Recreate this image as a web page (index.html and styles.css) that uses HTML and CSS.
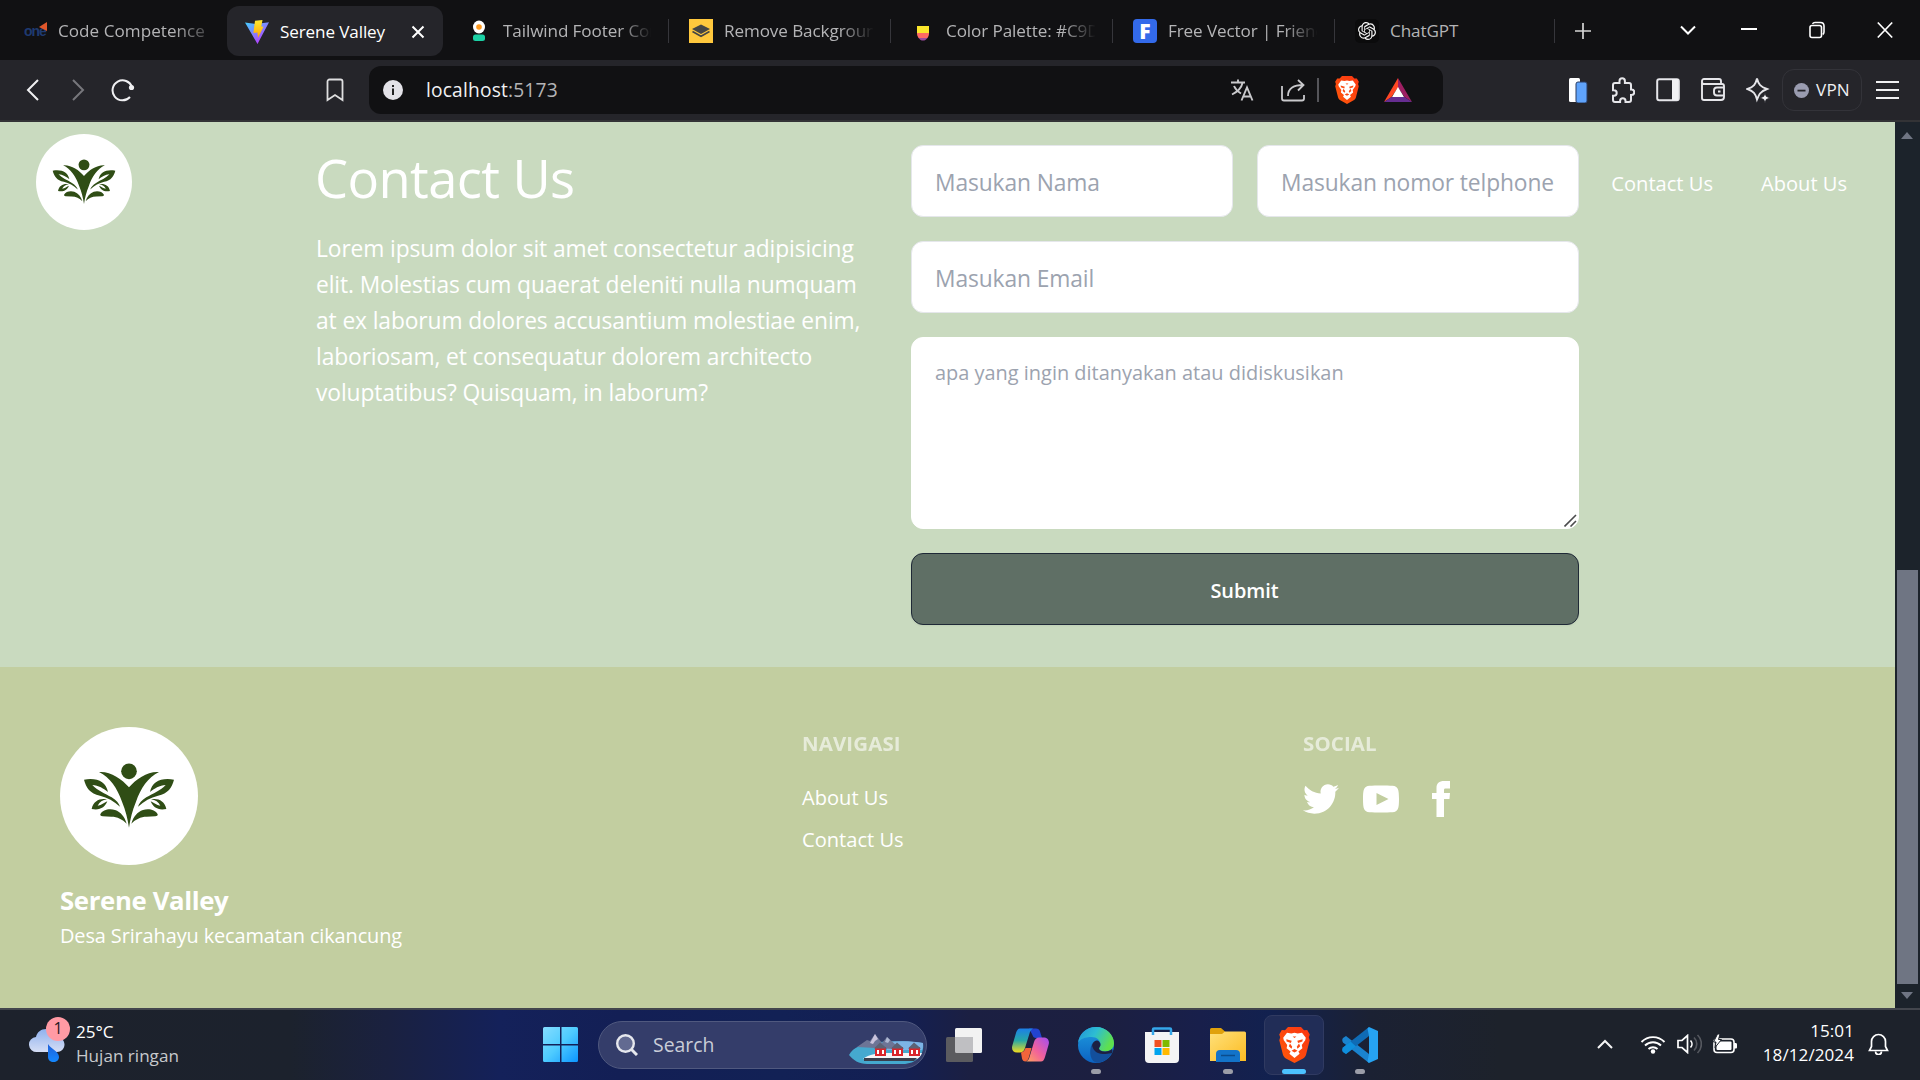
FILE: index.html
```html
<!DOCTYPE html>
<html lang="id">
<head>
<meta charset="utf-8">
<title>Serene Valley</title>
<link rel="stylesheet" href="styles.css">
</head>
<body>
<svg class="defs" width="0" height="0" aria-hidden="true">
  <defs>
    <g id="logo-half">
      <path d="M387 262C365 236 330 213 297 216C330 232 352 265 366 305C377 332 383 356 387 383Z"/>
      <path d="M252 239C290 232 318 245 324 276C312 266 295 256 277 255C292 272 315 280 335 292C349 301 357 310 360 320C342 303 322 292 300 287C270 281 258 262 252 239Z"/>
      <path d="M275 327C280 302 300 294 321 298C308 300 298 306 293 317C305 316 312 308 322 304C315 322 300 332 275 327Z"/>
      <path d="M301 343C308 328 330 325 345 330C362 336 374 350 380 371C368 358 352 350 334 350L308 349C302 348 300 346 301 343Z"/>
    </g>
    <symbol id="logo" viewBox="180 81 414 414">
      <g fill="#2f4d15">
        <circle cx="387" cy="214" r="23.5"/>
        <use href="#logo-half"/>
        <use href="#logo-half" transform="matrix(-1 0 0 1 774 0)"/>
      </g>
    </symbol>
    <symbol id="lion" viewBox="0 0 31 36">
      <path fill="url(#lion-g)" d="M9 0h13l3 3.2 3.200-.2 2.600 4.500-1 2.700.9 3-3.600 14.200c-.5 1.800-1.500 3-3 4L15.500 36l-8.600-4.600c-1.500-1-2.500-2.200-3-4L.3 13.200l.9-3-1-2.700L2.800 3 6 3.200z"/>
      <path fill="#fff" d="M8 5.800l4.300.7 3.200-.8 3.200.8 4.300-.7 3.800 5-.6 2.400-3.400 4.800.6 3.200-4 3.300 1.200 2.300-5.100 4.200-5.100-4.200 1.200-2.300-4-3.300.6-3.200-3.400-4.800-.6-2.400z"/>
      <path fill="#fb4a12" d="M7.300 12.200l5.400 1.600-.8 2.300-4.300-1.700zM23.700 12.200l-5.400 1.600.8 2.300 4.300-1.700zM13.600 9.500h3.800l-1.900 1.600zM11 16.500l2.200 3.200-.7 2-2.700-2.400zM20 16.500l-2.200 3.200.7 2 2.700-2.400zM12.500 23.700l3-1.600 3 1.600-3 1.800z"/>
    </symbol>
    <linearGradient id="lion-g" x1="0" y1="1" x2="1" y2="0"><stop offset="0" stop-color="#ff5a0a"/><stop offset="1" stop-color="#fa3512"/></linearGradient>
    <linearGradient id="vite-a" x1="0" y1="0" x2=".7" y2="1"><stop offset="0" stop-color="#41d1ff"/><stop offset="1" stop-color="#bd34fe"/></linearGradient>
    <linearGradient id="vite-b" x1="0" y1="0" x2="0" y2="1"><stop offset="0" stop-color="#ffea30"/><stop offset="1" stop-color="#ffa200"/></linearGradient>
    <linearGradient id="win-g" x1="0" y1="0" x2="1" y2="1"><stop offset="0" stop-color="#85ddff"/><stop offset=".5" stop-color="#4ecbff"/><stop offset="1" stop-color="#0c95ff"/></linearGradient>
    <linearGradient id="cloud-g" x1="0" y1="0" x2="0" y2="1"><stop offset="0" stop-color="#8fb1ee"/><stop offset="1" stop-color="#d5def5"/></linearGradient>
    <linearGradient id="drop-g" x1="0" y1="0" x2="0" y2="1"><stop offset="0" stop-color="#1f5fd8"/><stop offset="1" stop-color="#1488ff"/></linearGradient>
    <linearGradient id="cop-a" x1="0" y1="0" x2="0" y2="1"><stop offset="0" stop-color="#1c7fe8"/><stop offset=".5" stop-color="#27a8a6"/><stop offset="1" stop-color="#f2dc1e"/></linearGradient>
    <linearGradient id="cop-b" x1="1" y1="0" x2="0" y2="1"><stop offset="0" stop-color="#a44df0"/><stop offset=".55" stop-color="#f2629a"/><stop offset="1" stop-color="#ffa45c"/></linearGradient>
    <linearGradient id="edge-a" x1="0" y1="0" x2="1" y2=".4"><stop offset="0" stop-color="#2290d8"/><stop offset=".5" stop-color="#2dbdd3"/><stop offset="1" stop-color="#5fe04e"/></linearGradient>
    <linearGradient id="edge-b" x1="0" y1="0" x2="0" y2="1"><stop offset="0" stop-color="#1e9ddf"/><stop offset="1" stop-color="#0c62c2"/></linearGradient>
    <linearGradient id="folder-g" x1="0" y1="0" x2="1" y2="1"><stop offset="0" stop-color="#ffe07a"/><stop offset="1" stop-color="#fcbc22"/></linearGradient>
  </defs>
</svg>

<div class="tabstrip">
  <div class="tab tab-first">
    <span class="favicon one">one<svg width="8" height="9" viewBox="0 0 8 9"><path d="M8 0v9L0 5z" fill="#e0572b"/></svg></span>
    <span class="tab-title">Code Competence</span>
  </div>
  <div class="tab tab-active">
    <svg class="favicon" viewBox="0 0 24 24"><path fill="url(#vite-a)" d="M0 2.500l11 1.500 13-1.700L12.500 24z"/><path fill="url(#vite-b)" d="M10 .8L17.500 0l-1.200 6.500 2.200.2L13 18l-.6-5.500-4 .5z"/></svg>
    <span class="tab-title">Serene Valley</span>
    <svg class="tab-close" width="14" height="14" viewBox="0 0 14 14" stroke="#fff" stroke-width="2"><path d="M1.500 1.500l11 11M12.500 1.500l-11 11"/></svg>
  </div>
  <div class="tab tab-third">
    <svg class="favicon" viewBox="0 0 24 24"><ellipse cx="12" cy="8" rx="6" ry="6.500" fill="#fff"/><circle cx="12" cy="8" r="2.800" fill="#ff9a1f"/><rect x="6" y="15.500" width="12" height="6.500" rx="2.500" fill="#1bd1a5"/></svg>
    <span class="tab-title">Tailwind Footer Component</span>
  </div>
  <div class="tab">
    <svg class="favicon" viewBox="0 0 24 24"><path fill="#ffc83d" d="M0 0h24v24H0z"/><path fill="#454545" d="M12 5.500l9 4.500-9 5-9-5z"/><path fill="none" stroke="#454545" stroke-width="1.600" d="M3.500 12.500l8.500 4.800 8.500-4.800"/></svg>
    <span class="tab-title">Remove Background</span>
  </div>
  <div class="tab">
    <svg class="favicon" viewBox="0 0 24 24"><path fill="#fbe72b" d="M6 7h12v8H6z"/><path fill="#ff6a63" d="M6 14h12c0 2-.5 3.500-1.500 5h-9C6.500 17.500 6 16 6 14z"/><path fill="#9a4a9e" d="M7.500 19h9c-1.300 1.700-2.800 2.600-4.500 2.600S8.800 20.700 7.500 19z"/></svg>
    <span class="tab-title">Color Palette: #C9DABF</span>
  </div>
  <div class="tab">
    <span class="favicon freepik">F</span>
    <span class="tab-title">Free Vector | Friendly</span>
  </div>
  <div class="tab tab-last">
    <svg class="favicon gpt" viewBox="-4 -4 32 32"><path fill="#f4f4f4" d="M22.2819 9.8211a5.9847 5.9847 0 0 0-.5157-4.9108 6.0462 6.0462 0 0 0-6.5098-2.9A6.0651 6.0651 0 0 0 4.9807 4.1818a5.9847 5.9847 0 0 0-3.9977 2.9 6.0462 6.0462 0 0 0 .7427 7.0966 5.98 5.98 0 0 0 .511 4.9107 6.051 6.051 0 0 0 6.5146 2.9001A5.9847 5.9847 0 0 0 13.2599 24a6.0557 6.0557 0 0 0 5.7718-4.2058 5.9894 5.9894 0 0 0 3.9977-2.9001 6.0557 6.0557 0 0 0-.7475-7.0729zm-9.022 12.6081a4.4755 4.4755 0 0 1-2.8764-1.0408l.1419-.0804 4.7783-2.7582a.7948.7948 0 0 0 .3927-.6813v-6.7369l2.02 1.1686a.071.071 0 0 1 .038.052v5.5826a4.504 4.504 0 0 1-4.4945 4.4944zm-9.6607-4.1254a4.4708 4.4708 0 0 1-.5346-3.0137l.142.0852 4.783 2.7582a.7712.7712 0 0 0 .7806 0l5.8428-3.3685v2.3324a.0804.0804 0 0 1-.0332.0615L9.74 19.9502a4.4992 4.4992 0 0 1-6.1408-1.6464zM2.3408 7.8956a4.485 4.485 0 0 1 2.3655-1.9728V11.6a.7664.7664 0 0 0 .3879.6765l5.8144 3.3543-2.0201 1.1685a.0757.0757 0 0 1-.071 0l-4.8303-2.7865A4.504 4.504 0 0 1 2.3408 7.872zm16.5963 3.8558L13.1038 8.364 15.1192 7.2a.0757.0757 0 0 1 .071 0l4.8303 2.7913a4.4944 4.4944 0 0 1-.6765 8.1042v-5.6772a.79.79 0 0 0-.407-.667zm2.0107-3.0231l-.142-.0852-4.7735-2.7818a.7759.7759 0 0 0-.7854 0L9.409 9.2297V6.8974a.0662.0662 0 0 1 .0284-.0615l4.8303-2.7866a4.4992 4.4992 0 0 1 6.6802 4.66zM8.3065 12.863l-2.02-1.1638a.0804.0804 0 0 1-.038-.0567V6.0742a4.4992 4.4992 0 0 1 7.3757-3.4537l-.142.0805L8.704 5.459a.7948.7948 0 0 0-.3927.6813zm1.0976-2.3654l2.602-1.4998 2.6069 1.4998v2.9994l-2.5974 1.4997-2.6067-1.4997Z"/></svg>
    <span class="tab-title">ChatGPT</span>
  </div>
  <svg class="new-tab" width="16" height="16" viewBox="0 0 16 16" stroke="#d6d6d6" stroke-width="1.700"><path d="M8 0v16M0 8h16"/></svg>
  <div class="window-controls">
    <svg width="16" height="18" viewBox="0 0 16 18" fill="none" stroke="#fff" stroke-width="2"><path d="M1 5.500l7 7 7-7"/></svg>
    <svg width="16" height="18" viewBox="0 0 16 18" stroke="#fff" stroke-width="2"><path d="M0 8h16"/></svg>
    <svg width="16" height="18" viewBox="0 0 16 18" fill="none" stroke="#fff" stroke-width="1.600"><rect x="1" y="4.500" width="11.500" height="12" rx="2"/><path d="M3.500 2.800C4 2 5 1.500 6 1.500h5.500c2 0 3.500 1.500 3.500 3.500v6c0 1-.5 2-1.300 2.500"/></svg>
    <svg width="16" height="18" viewBox="0 0 16 18" stroke="#fff" stroke-width="1.700"><path d="M.8 1.500l14.400 15M15.200 1.500l-14.400 15"/></svg>
  </div>
</div>

<div class="toolbar">
  <svg class="nav-btn" viewBox="0 0 24 24" fill="none" stroke="#f0f0f2" stroke-width="2"><path d="M17 2L7 12l10 10"/></svg>
  <svg class="nav-btn" viewBox="0 0 24 24" fill="none" stroke="#77777c" stroke-width="2"><path d="M7 2l10 10L7 22"/></svg>
  <svg class="nav-btn" viewBox="0 0 24 24" fill="none" stroke="#f0f0f2" stroke-width="2"><path d="M19 19A10 10 0 1 1 21 9"/><circle cx="20.500" cy="9.500" r="2.600" fill="#f0f0f2" stroke="none"/></svg>
  <svg class="bookmark" viewBox="0 0 18 24" fill="none" stroke="#dededf" stroke-width="1.800"><path d="M1.500 3.500a2 2 0 0 1 2-2h11a2 2 0 0 1 2 2V22L9 17l-7.500 5z"/></svg>
  <div class="urlbar">
    <svg width="20" height="20" viewBox="0 0 20 20"><circle cx="10" cy="10" r="10" fill="#e3e2e8"/><path d="M9 8.500h2V15H9zM9 5h2v2H9z" fill="#222"/></svg>
    <span class="url">localhost<span class="port">:5173</span></span>
    <div class="url-icons">
      <svg width="24" height="24" viewBox="0 0 24 24" fill="none" stroke="#c9c9cc" stroke-width="1.900"><path d="M1 4.500h14M8 1.500v3M12.500 5C11.500 9.500 7 14 2 16.500M4 8c1.500 3.500 4.500 6 7 7.500M11.500 22.500L17 9.500l5.500 13M13.500 18.500h7"/></svg>
      <svg width="24" height="24" viewBox="0 0 24 24" fill="none" stroke="#c9c9cc" stroke-width="1.800"><path d="M1 8v12.500a2 2 0 0 0 2 2h18a2 2 0 0 0 2-2V17M17 2l5.500 5L17 12.500M22 7C13 7 7 10 7 18"/></svg>
      <i class="url-sep"></i>
      <svg class="brave" width="24" height="28"><use href="#lion"/></svg>
      <svg width="28" height="24" viewBox="0 0 28 24"><path fill="#ff4724" d="M14 0v9.500L7.500 19 0 24z"/><path fill="#9e1f63" d="M14 0l14 24-7.500-5L14 9.500z"/><path fill="#662d91" d="M0 24l7.500-5h13l7.500 5z"/><path fill="#fff" d="M14 9l6 10H8z"/></svg>
    </div>
  </div>
  <div class="extensions">
    <svg width="24" height="26" viewBox="0 0 24 26"><rect x="3" y="1" width="11" height="24" rx="1.500" fill="#fff"/><rect x="10" y="5" width="11" height="21" rx="2" fill="#5fa3fb" stroke="#2b3d63" stroke-width="1"/></svg>
    <svg width="24" height="26" viewBox="0 0 24 26" fill="none" stroke="#e6e6ea" stroke-width="2"><path d="M2 8a2 2 0 0 1 2-2h4.500V4a2.700 2.700 0 0 1 5.400 0v2H18a2 2 0 0 1 2 2v4.500h.5a2.700 2.700 0 0 1 0 5.500H20v5a2 2 0 0 1-2 2h-3.500v-1a2.700 2.700 0 0 0-5.400 0v1H4a2 2 0 0 1-2-2v-4.300h1a2.700 2.700 0 0 0 0-5.400H2z"/></svg>
    <svg width="24" height="26" viewBox="0 0 24 26"><rect x="1.200" y="2.200" width="21.600" height="21" rx="2" fill="none" stroke="#e6e6ea" stroke-width="2"/><path fill="#f1f1f4" d="M16 2h6v21h-6z"/></svg>
    <svg width="24" height="26" viewBox="0 0 24 26" fill="none" stroke="#e6e6ea" stroke-width="1.900"><path d="M20 7V4a2 2 0 0 0-2-2H3a2 2 0 0 0-2 2v17a2 2 0 0 0 2 2h17a3 3 0 0 0 3-3V9a2 2 0 0 0-2-2H3C1.800 7 1 6 1 5M23 10.500h-7a3 3 0 0 0-3 3v2a3 3 0 0 0 3 3h7M17 14.500h2.500"/></svg>
    <svg width="24" height="26" viewBox="0 0 24 26" fill="none" stroke="#e6e6ea" stroke-width="1.900"><path d="M11 1.500c1.500 6 3.500 8 10 10.500-3.500 1.300-5.500 2.500-7 4.500-1.300 1.700-2 3.500-3 6-1.500-6-3.500-8-9.500-10.500C8 9.500 9.500 7.500 11 1.500z"/><path d="M19 16l1.200 3.300L24 21l-3.800 1.500L19 26l-1.200-3.500L14 21l3.800-1.700z" fill="#f1f1f4" stroke="#25252a" stroke-width=".8"/></svg>
  </div>
  <div class="vpn">
    <svg width="15" height="15" viewBox="0 0 15 15"><circle cx="7.500" cy="7.500" r="7.500" fill="#9a9cb0"/><path fill="#25252a" d="M3.500 6.700h8v1.800h-8z"/></svg>
    <span>VPN</span>
  </div>
  <svg class="menu" width="23" height="18" viewBox="0 0 23 18" stroke="#f0f0f2" stroke-width="2"><path d="M0 1h23M0 9h23M0 17h23"/></svg>
</div>

<div class="viewport">
  <div class="page">
    <header class="site-nav">
      <svg class="nav-logo"><use href="#logo"/></svg>
      <nav class="nav-links"><a>Contact Us</a><a>About Us</a></nav>
    </header>
    <section class="contact">
      <div class="intro">
        <h1>Contact Us</h1>
        <p>Lorem ipsum dolor sit amet consectetur adipisicing<br>elit. Molestias cum quaerat deleniti nulla numquam<br>at ex laborum dolores accusantium molestiae enim,<br>laboriosam, et consequatur dolorem architecto<br>voluptatibus? Quisquam, in laborum?</p>
      </div>
      <form class="form">
        <div class="form-row">
          <input class="field" type="text" placeholder="Masukan Nama">
          <input class="field" type="text" placeholder="Masukan nomor telphone">
        </div>
        <input class="field" type="text" placeholder="Masukan Email">
        <div class="area-wrap">
          <textarea class="field area" placeholder="apa yang ingin ditanyakan atau didiskusikan"></textarea>
          <svg class="grip" width="13" height="13" viewBox="0 0 13 13" stroke="#4b4b4d" stroke-width="1.600"><path d="M.5 12.500l11.500-11.500M6.500 12.500L12 7"/></svg>
        </div>
        <button class="submit" type="button">Submit</button>
      </form>
    </section>
    <footer class="footer">
      <aside class="brand">
        <svg class="brand-logo"><use href="#logo"/></svg>
        <strong>Serene Valley</strong>
        <span>Desa Srirahayu kecamatan cikancung</span>
      </aside>
      <nav class="foot-col foot-nav">
        <h6>NAVIGASI</h6>
        <a>About Us</a>
        <a>Contact Us</a>
      </nav>
      <nav class="foot-col">
        <h6>SOCIAL</h6>
        <div class="social">
          <svg viewBox="0 0 24 24"><path d="M24 4.557c-.883.392-1.832.656-2.828.775 1.017-.609 1.798-1.574 2.165-2.724-.951.564-2.005.974-3.127 1.195-.897-.957-2.178-1.555-3.594-1.555-3.179 0-5.515 2.966-4.797 6.045-4.091-.205-7.719-2.165-10.148-5.144-1.290 2.213-.669 5.108 1.523 6.574-.806-.026-1.566-.247-2.229-.616-.054 2.281 1.581 4.415 3.949 4.890-.693.188-1.452.232-2.224.084.626 1.956 2.444 3.379 4.600 3.419-2.070 1.623-4.678 2.348-7.290 2.040 2.179 1.397 4.768 2.212 7.548 2.212 9.142 0 14.307-7.721 13.995-14.646.962-.695 1.797-1.562 2.457-2.549z"/></svg>
          <svg viewBox="0 0 24 24"><path d="M19.615 3.184c-3.604-.246-11.631-.245-15.230 0-3.897.266-4.356 2.620-4.385 8.816.029 6.185.484 8.549 4.385 8.816 3.600.245 11.626.246 15.230 0 3.897-.266 4.356-2.620 4.385-8.816-.029-6.185-.484-8.549-4.385-8.816zm-10.615 12.816v-8l8 3.993-8 4.007z"/></svg>
          <svg viewBox="0 0 24 24"><path d="M9 8h-3v4h3v12h5v-12h3.642l.358-4h-4v-1.667c0-.955.192-1.333 1.115-1.333h2.885v-5h-3.808c-3.596 0-5.192 1.583-5.192 4.615v3.385z"/></svg>
        </div>
      </nav>
    </footer>
  </div>
  <div class="scrollbar">
    <svg width="12" height="7" viewBox="0 0 12 7"><path fill="#6f7583" d="M6 0l6 7H0z"/></svg>
    <div class="thumb"></div>
    <svg width="12" height="7" viewBox="0 0 12 7"><path fill="#6f7583" d="M0 0h12L6 7z"/></svg>
  </div>
</div>

<div class="taskbar">
  <div class="weather">
    <div class="weather-icon">
      <svg width="36" height="34" viewBox="0 0 36 34"><path fill="url(#cloud-g)" d="M8 24a7.500 7.500 0 0 1-1-15C8 4 12 1 17 1c6 0 9 3.500 10 8 5 .3 8.500 3 8.500 7.500S32 24 28 24z"/><path fill="url(#drop-g)" d="M19 16c2 4 11 7.500 11 13 0 3-2.500 5-5.500 5S19 32 19 29z"/></svg>
      <span class="badge">1</span>
    </div>
    <div class="weather-text"><span>25°C</span><span class="dim">Hujan ringan</span></div>
  </div>
  <svg class="start" width="36" height="36" viewBox="0 0 36 36"><path fill="url(#win-g)" d="M1.500 0H17v17H0V1.500A1.500 1.500 0 0 1 1.500 0zM18.500 0h15A1.500 1.500 0 0 1 35 1.500V17H18.500zM0 18.500h17v16.500H1.500A1.500 1.500 0 0 1 0 33.500zM18.500 18.500H35v15a1.500 1.500 0 0 1-1.500 1.500h-15z"/></svg>
  <div class="search">
    <svg width="22" height="22" viewBox="0 0 22 22" fill="none" stroke="#e6e8ee" stroke-width="2.400"><circle cx="9.500" cy="9.500" r="8.300" fill="#626a91"/><path d="M15.500 15.500L21 21" stroke-width="3"/></svg>
    <span>Search</span>
    <svg class="village" width="75" height="31" viewBox="0 0 75 31">
      <path fill="#45a9cf" d="M0 21C4 13 14 9 30 8c14-1 30-1 44 1 1 6-1 11-4 14-4 5-10 7-16 7H18C10 30 4 26 0 21z"/>
      <path fill="#7db4e6" d="M38 8c12-1 26-1 36 1 0 3 0 5-1 7H38z"/>
      <path fill="#6d7596" d="M8 13L18 6l3 1 5-7 7 9 5-6 9 8 6 2-8 2z"/><path fill="#c9c3dc" d="M26 0l3 5-3 2-2 3-3-1z"/><path fill="#aeb7d2" d="M38 3l3 3-2 3-3-1z"/>
      <path fill="#f3f5f8" d="M14 25c6-5 14-6 26-6h33c-1 3-3 5-5 6z"/><path fill="#3a3f4c" d="M15 24h53l-3 3H15z"/>
      <g fill="#d8262c"><path d="M26 13h11v9H26zM43 13h11v9H43zM60 13h11v9H60z"/></g>
      <g fill="#5c6275"><path d="M25 14.500l6-6 7 6zM42 14.500l6-6 7 6zM59 14.500l6-6 7 6z"/></g>
      <g fill="#fff"><path d="M28 16h2v4h-2zM33 16h2v4h-2zM45 16h2v4h-2zM50 16h2v4h-2zM62 16h2v4h-2zM67 16h2v4h-2z"/></g>
    </svg>
  </div>
  <div class="apps">
    <div class="app"><svg width="36" height="34" viewBox="0 0 36 34"><rect x="9" y="0" width="27" height="25" rx="1.500" fill="#f2f2f2"/><rect x="0" y="9" width="27" height="25" rx="1.500" fill="#5b5b5f"/><path fill="#bfbfc2" d="M9 9h18v16H10.500A1.500 1.500 0 0 1 9 23.500z"/></svg></div>
    <div class="app"><svg width="37" height="34" viewBox="0 0 37 34"><path fill="#2343cf" d="M17 .5h7c2 0 3.500 1 4 3l2 6.500h-6c-2 0-3-1-3.500-3z"/><path fill="url(#cop-a)" d="M8 .5h13c-2 1-3 3-3.500 5L13 20c-1 3.500-3 4.500-5 4.500H5c-4 0-6-3-4.500-7.500l3.500-12C5 2 6 .5 8 .5z"/><path fill="#f2653b" d="M9 24.500c2-.3 3.500-1.500 4.500-4.500h6l-2.500 9c-.5 2.500-1.500 3.500-3.500 4.500-2 0-3-1-3.500-3z"/><path fill="url(#cop-b)" d="M29 33.500H14c2-1 3-2.500 3.500-4.500L22 14c1-3 2.500-4.500 5-4.500h4.500c4 0 6.500 3 5 7.500L33 29c-1 3-2 4.500-4 4.500z"/></svg></div>
    <div class="app running"><svg width="36" height="36" viewBox="0 0 36 36"><circle cx="18" cy="18" r="18" fill="url(#edge-b)"/><path fill="#134f9c" d="M13 19c-1 8 5 14.500 12 14.800 3.500-1.300 6.500-3.800 8.500-7-8 3-16 .5-17-7z"/><path fill="url(#edge-a)" d="M0 16C1 7 8 0 18 0c10.500 0 18 8 18 16 0 5.500-4 8.500-9 8.500-4 0-6-1.500-6-3 0-1 1.500-2 1.500-4.500 0-3.500-3.500-7-9-7C7 10 2 12 0 16z"/><path fill="#1c2143" d="M14 19c0-3.500 3-5.500 5.500-5.500 2 1 3 2.500 3 4.500 0 1.500-1.500 2.300-1.500 3.500 0 1.500 2 3 6 3 3 0 5.500-1 7-2.500 1 1.500.5 3-.5 4.500-8 3-19.500 1-19.500-7.500z"/><path fill="#134f9c" d="M14 17c0 6 5 10 11 10 3.500 0 6.500-1 8-.8-3 6-8 9.300-14 9.600-6-1-9-10-5-18.800z"/></svg></div>
    <div class="app"><svg width="36" height="36" viewBox="0 0 36 36"><path fill="none" stroke="#35a7ea" stroke-width="2.500" d="M9 8V2.500A1 1 0 0 1 10 1.500h16a1 1 0 0 1 1 1V8"/><path fill="#f4f4f5" d="M1 5h34v27a4 4 0 0 1-4 4H5a4 4 0 0 1-4-4z"/><path stroke="#35a7ea" stroke-width="2.500" d="M9 5v3M27 5v3"/><path fill="#f25022" d="M10.500 13h7v7h-7z"/><path fill="#7fba00" d="M18.500 13h7v7h-7z"/><path fill="#00a4ef" d="M10.500 21h7v7h-7z"/><path fill="#ffb900" d="M18.500 21h7v7h-7z"/></svg></div>
    <div class="app running"><svg width="36" height="34" viewBox="0 0 36 34"><path fill="#e0a10c" d="M0 1.500A1.500 1.500 0 0 1 1.500 0H11l4 3.500V8H0z"/><path fill="url(#folder-g)" d="M0 6h12l3-2.500h19.500A1.500 1.500 0 0 1 36 5v28H0z"/><path fill="#1373c9" d="M6 34v-8a4 4 0 0 1 4-4h16a4 4 0 0 1 4 4v8z"/><path stroke="#0b4c8c" stroke-width="1.500" d="M11 27.500h14"/></svg></div>
    <div class="app running current"><svg width="31" height="36"><use href="#lion"/></svg></div>
    <div class="app running"><svg width="36" height="36" viewBox="0 0 36 36"><path fill="#1a83cf" d="M1 11l3-2 23 18v9L1 15.500C0 14 0 12 1 11z"/><path fill="#0f6bb5" d="M1 25l3 2L27 9V0L1 20.500C0 22 0 24 1 25z"/><path fill="#0f8fdd" d="M1 25l3 2 10-7.500-5.500-5L1 20.500C0 22 0 24 1 25z"/><path fill="#26a3f2" d="M27 0l9 4v28l-9 4-1.500-1.500L27 27V9l-1.500-7.500z"/></svg></div>
  </div>
  <div class="tray">
    <svg width="16" height="10" viewBox="0 0 16 10" fill="none" stroke="#f5f5f5" stroke-width="2"><path d="M1 9l7-7 7 7"/></svg>
    <svg class="wifi" width="26" height="19" viewBox="0 0 26 19" fill="none" stroke="#fff" stroke-width="1.900"><path d="M1.500 7a16 16 0 0 1 23 0M5 10.500a11.500 11.500 0 0 1 16 0M8.500 14a6.500 6.500 0 0 1 9 0"/><circle cx="13" cy="16.500" r="2.200" fill="#fff" stroke="none"/></svg>
    <svg class="speaker" width="25" height="20" viewBox="0 0 25 20" fill="none" stroke="#fff" stroke-width="1.700"><path d="M1 6.500h4l5.500-5v17L5 13.500H1zM13.500 6.500a5 5 0 0 1 0 7"/><path stroke="#55585f" d="M17 3.500a9 9 0 0 1 0 13M20.500 1a12.500 12.500 0 0 1 0 18"/></svg>
    <svg class="battery" width="25" height="20" viewBox="0 0 25 20"><rect x="1" y="5" width="20" height="13.500" rx="3" fill="none" stroke="#fff" stroke-width="1.600"/><rect x="3.500" y="7.500" width="15" height="8.500" rx="1" fill="#fff"/><path fill="#fff" d="M21 9h1.500c1 0 1.500.6 1.500 1.500v2.500c0 1-.5 1.500-1.500 1.500H21z"/><path fill="#fff" stroke="#1d222b" d="M4.500 0L.5 8H3l-1 5.500L8.500 5.500H5.500L7 0z"/></svg>
    <div class="clock"><span>15:01</span><span>18/12/2024</span></div>
    <svg class="bell" width="21" height="22" viewBox="0 0 21 22" fill="none" stroke="#fff" stroke-width="1.700"><path d="M1.500 17.500l2-4V8.500a7 7 0 0 1 14 0v5l2 4z"/><path d="M7.500 18.500a3 3 0 0 0 6 0"/></svg>
  </div>
</div>
</body>
</html>
```
FILE: styles.css
```css
* { box-sizing: border-box; }

body {
  margin: 0;
  width: 1920px;
  height: 1080px;
  overflow: hidden;
  display: flex;
  flex-direction: column;
  font-family: "Open Sans", "Noto Sans", sans-serif;
  background: #111113;
}

svg { display: block; flex: none; }
.defs { position: absolute; }

/* Tab strip */
.tabstrip {
  height: 60px;
  display: flex;
  align-items: center;
  background: #111113;
  color: #b4b4b6;
  font-size: 17.1px;
  padding-bottom: 1px;
  flex: none;
}
.tab {
  width: 222px;
  height: 50px;
  display: flex;
  align-items: center;
  gap: 12px;
  padding: 3px 17px 0 20px;
  border-right: 1px solid transparent;
  position: relative;
  flex: none;
}
.tab::after {
  content: "";
  position: absolute;
  right: -1px;
  top: 14px;
  width: 1px;
  height: 24px;
  background: #36363b;
}
.favicon { width: 24px; height: 24px; flex: none; }
.tab-title {
  flex: 1;
  overflow: hidden;
  white-space: nowrap;
  line-height: 26px;
  letter-spacing: -0.1px;
}
.tab:nth-child(n+3):not(.tab-last) .tab-title {
  mask-image: linear-gradient(to right, #000 116px, transparent 150px);
}
.tab-first { width: 227px; padding-left: 24px; gap: 10px; padding-right: 19px; }
.tab-first .tab-title { letter-spacing: 0.03px; mask-image: linear-gradient(to right, #000 115px, rgba(0,0,0,.3) 149px); }
.tab-first::after, .tab-active::after { display: none; }
.one {
  display: flex;
  align-items: center;
  font: bold 14px/24px "Liberation Sans", sans-serif;
  letter-spacing: -1px;
  color: #1f3a70;
}
.one svg { margin: -10px 0 0 -7px; }
.tab-active {
  width: 216px;
  margin-top: 3px;
  padding: 1px 18px 0 18px;
  background: #25252a;
  border: 0;
  border-radius: 12px;
  color: #fff;
}
.tab-active .tab-title { margin-left: -1px; letter-spacing: -0.12px; }
.tab-third { width: 226px; padding-left: 24px; }
.tab:nth-child(n+4) { padding-left: 20px; }
.tab:nth-child(n+4) .tab-title { margin-left: -1px; }
.freepik {
  border-radius: 4px;
  background: #336aea;
  color: #fff;
  font: 900 21px/24px "Open Sans", sans-serif;
  text-align: center;
}
.gpt { background: #0b0b0c; border-radius: 5px; }
.tab-last { width: 220px; }
.new-tab { margin: 2px 0 0 20px; }
.window-controls {
  display: flex;
  align-items: center;
  gap: 52px;
  margin: 0 27px 0 auto;
}
.window-controls svg:first-child { margin-right: -7px; }

/* Toolbar */
.toolbar {
  height: 62px;
  flex: none;
  display: flex;
  align-items: center;
  padding: 0 21px 0 21px;
  background: #25252a;
  border-bottom: 2px solid #333336;
}
.nav-btn { width: 24px; height: 24px; margin-right: 21px; }
.bookmark { width: 18px; height: 24px; margin-left: 170px; }
.urlbar {
  width: 1074px;
  height: 48px;
  margin-left: 25px;
  padding: 0 31px 0 14px;
  display: flex;
  align-items: center;
  background: #111113;
  border-radius: 12px;
}
.url {
  margin-left: 23px;
  font-size: 19.2px;
  letter-spacing: 0.18px;
  color: #f0f0f2;
  padding-bottom: 1px;
}
.port { color: #b4b4b6; }
.url-icons { display: flex; align-items: center; margin-left: auto; }
.url-icons svg + svg { margin-left: 27px; }
.url-icons .brave + svg { margin-left: 25px; }
.url-sep { width: 2px; height: 24px; background: #55555a; margin: 0 16px 0 12px; }
.extensions { display: flex; gap: 21px; margin-left: 123px; }
.vpn {
  width: 80px;
  height: 42px;
  margin-left: 12px;
  display: flex;
  align-items: center;
  gap: 7px;
  padding-left: 11px;
  border: 1px solid #333339;
  border-radius: 12px;
  font-size: 17.1px;
  letter-spacing: 0.2px;
  color: #f0f0f2;
}
.vpn span { padding-bottom: 1px; }
.menu { margin-left: auto; }

/* Web page */
.viewport { height: 886px; flex: none; display: flex; }
.page { width: 1895px; position: relative; background: #c9dabf; color: #fff; }
.site-nav {
  position: absolute;
  inset: 0 0 auto 0;
  height: 120px;
  padding: 0 48px 0 36px;
  display: flex;
  align-items: center;
  justify-content: space-between;
  pointer-events: none;
}
.nav-logo { width: 96px; height: 96px; border-radius: 50%; background: #fff; }
.nav-links { display: flex; gap: 48px; font-size: 20.1px; line-height: 30px; padding-top: 3px; }
.contact {
  height: 545px;
  padding: 23px 316px 0 316px;
  display: flex;
  justify-content: space-between;
}
.intro h1 {
  margin: 6px 0 26px -1px;
  font-size: 52.5px;
  font-weight: 400;
  line-height: 54px;
  letter-spacing: -0.6px;
}
.intro p {
  margin: 0;
  font-size: 22.8px;
  line-height: 36px;
  letter-spacing: -0.11px;
  white-space: nowrap;
}
.form { width: 668px; display: flex; flex-direction: column; gap: 24px; }
.form-row { display: grid; grid-template-columns: 1fr 1fr; gap: 24px; }
.field {
  display: block;
  width: 100%;
  min-width: 0;
  height: 72px;
  padding: 3px 23px 0;
  border: 1px solid #e5e7eb;
  border-radius: 12px;
  background: #fff;
  font-family: inherit;
  font-size: 22.8px;
  letter-spacing: -0.11px;
  outline: none;
}
.field::placeholder { color: #9ca3af; opacity: 1; }
.area-wrap { position: relative; }
.area {
  height: 192px;
  padding: 20px 23px;
  border-color: #fff;
  resize: none;
  font-size: 19.95px;
  line-height: 30px;
  letter-spacing: 0;
}
.grip { position: absolute; right: 2px; bottom: 2px; }
.submit {
  height: 72px;
  padding: 2px 1px 0 0;
  border: 1px solid #1f2937;
  border-radius: 12px;
  background: #5f6f65;
  color: #fff;
  font-family: inherit;
  font-size: 19.95px;
  font-weight: 600;
  letter-spacing: -0.08px;
  box-shadow: 0 1px 2px rgba(0, 0, 0, .05);
}

/* Footer */
.footer {
  height: 341px;
  padding: 60px;
  display: grid;
  grid-template-columns: 742px 501px auto;
  align-items: start;
  background: #c2cea0;
}
.brand { display: flex; flex-direction: column; }
.brand-logo { width: 138px; height: 138px; border-radius: 50%; background: #fff; }
.brand strong { margin-top: 17px; font-size: 25.8px; line-height: 36px; letter-spacing: -0.38px; }
.brand span { margin-top: 2px; font-size: 19.95px; line-height: 32px; letter-spacing: -0.12px; }
.foot-col { display: flex; flex-direction: column; font-size: 20.1px; line-height: 30px; }
.foot-col h6 {
  margin: 1px 0 25px;
  font-size: 20.4px;
  font-weight: 700;
  line-height: 30px;
  letter-spacing: 0.15px;
  opacity: .6;
}
.foot-col a + a { margin-top: 12px; }
.social { display: flex; gap: 24px; margin-top: -2px; }
.social svg { width: 36px; height: 36px; fill: #fff; }
.scrollbar {
  width: 25px;
  padding: 10px 0 9px 2px;
  display: flex;
  flex-direction: column;
  background: #1c232b;
}
.scrollbar svg { margin-left: 4px; }
.thumb { width: 21px; height: 414px; margin: 431px 0 auto; background: #6f7583; }

/* Taskbar */
.taskbar {
  height: 72px;
  flex: none;
  display: flex;
  align-items: center;
  border-top: 2px solid #43464d;
  background: linear-gradient(to right, #1d222c 0, #1c222d 290px, #1a2140 390px, #14215a 500px, #131f55 620px, #122155 780px, #131f53 900px, #1b1f42 970px, #1c1f40 1100px, #181f4b 1200px, #12214f 1270px, #1b2133 1370px, #1d222b 1500px, #1d222b 100%);
  color: #fff;
  font-size: 17.1px;
}
.weather { display: flex; width: 543px; height: 70px; padding-left: 29px; gap: 11px; }
.weather-icon { position: relative; width: 36px; padding-top: 18px; }
.badge {
  position: absolute;
  left: 17px;
  top: 7px;
  width: 24px;
  height: 24px;
  border-radius: 50%;
  background: #ff9aa4;
  color: #1b1b1f;
  font-size: 16px;
  line-height: 23px;
  text-align: center;
}
.weather-text, .clock { display: flex; flex-direction: column; line-height: 24px; }
.weather-text { padding-top: 10px; }
.dim { color: #c7c9cc; }
.search {
  width: 329px;
  height: 48px;
  margin-left: 19px;
  padding: 0 2px 0 17px;
  display: flex;
  align-items: center;
  border: 1.500px solid #50597f;
  border-radius: 24px;
  background: #343d6a;
  font-size: 19.4px;
  color: #c9cdd8;
}
.search span { margin: -1px 0 0 15px; }
.village { margin: 8px 0 0 auto; }
.apps { display: flex; margin-left: 7px; gap: 6px; }
.app {
  position: relative;
  width: 60px;
  height: 60px;
  display: flex;
  align-items: center;
  justify-content: center;
}
.running::after {
  content: "";
  position: absolute;
  left: 25px;
  bottom: 1px;
  width: 10px;
  height: 5px;
  border-radius: 3px;
  background: #9b9da8;
}
.current { border: 1px solid #303a61; border-radius: 8px; background: #212d57; }
.current::after { left: 17px; bottom: 0; width: 24px; background: #4cc2ff; }
.tray { display: flex; align-items: center; margin: 0 31px 2px auto; }
.wifi { margin-left: 27px; }
.speaker { margin-left: 11px; }
.battery { margin-left: 11px; }
.clock { width: 116px; text-align: right; letter-spacing: 0.05px; padding-bottom: 2px; }
.bell { margin-left: 14px; }
```
